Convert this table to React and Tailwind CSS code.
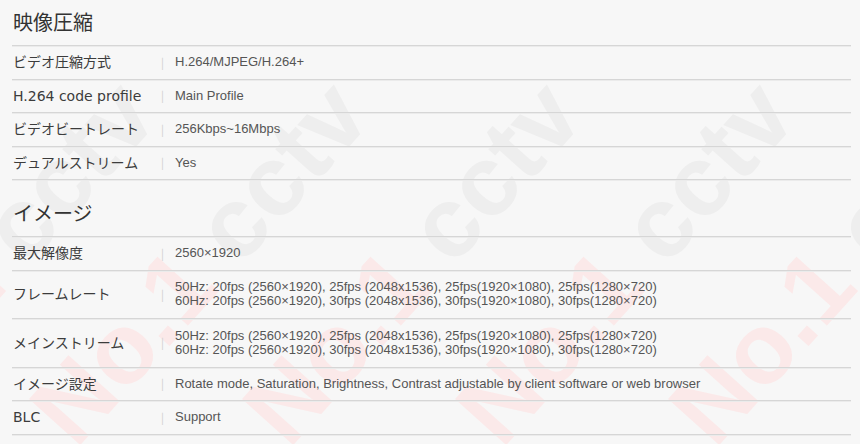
const sections = [
  {
    title: '映像圧縮',
    rows: [
      { label: 'ビデオ圧縮方式', value: ['H.264/MJPEG/H.264+'] },
      { label: 'H.264 code profile', value: ['Main Profile'] },
      { label: 'ビデオビートレート', value: ['256Kbps~16Mbps'] },
      { label: 'デュアルストリーム', value: ['Yes'] },
    ],
  },
  {
    title: 'イメージ',
    rows: [
      { label: '最大解像度', value: ['2560×1920'] },
      {
        label: 'フレームレート',
        value: [
          '50Hz: 20fps (2560×1920), 25fps (2048x1536), 25fps(1920×1080), 25fps(1280×720)',
          '60Hz: 20fps (2560×1920), 30fps (2048x1536), 30fps(1920×1080), 30fps(1280×720)',
        ],
      },
      {
        label: 'メインストリーム',
        value: [
          '50Hz: 20fps (2560×1920), 25fps (2048x1536), 25fps(1920×1080), 25fps(1280×720)',
          '60Hz: 20fps (2560×1920), 30fps (2048x1536), 30fps(1920×1080), 30fps(1280×720)',
        ],
      },
      { label: 'イメージ設定', value: ['Rotate mode, Saturation, Brightness, Contrast adjustable by client software or web browser'] },
      { label: 'BLC', value: ['Support'] },
    ],
  },
];

// watermark tiles, one every 213px
const marks = [-126, 87, 300, 513, 726];

function Watermark({ left }) {
  return (
    <div
      className='absolute top-[360px] h-[100px] origin-bottom-left -rotate-[48deg] whitespace-nowrap font-["Liberation_Sans",Arial,sans-serif] font-bold text-[100px] leading-[100px]'
      style={{ left }}
    >
      <span className='text-[#fbe9e9]'>No.1 </span>
      <span className='text-[#eeeeee]'>cctv</span>
    </div>
  );
}

function Row({ label, value }) {
  const tall = value.length > 1;
  return (
    <div
      className={
        'flex items-center border-b border-[#d6d6d6] shadow-[0_1px_0_#ebebeb] ' +
        (tall ? 'min-h-[48.5px]' : 'min-h-[33.5px]')
      }
    >
      <div className='w-[149px] pl-px text-[14px] text-[#3c3c3c] leading-5 font-["DejaVu_Sans","Noto_Sans_CJK_JP",sans-serif]'>
        {label}
      </div>
      <div className='w-[14px] text-[11px] text-[#cfcfcf] leading-none'>|</div>
      <div className='text-[13px] text-[#555] leading-[14px] font-["Liberation_Sans",Arial,sans-serif]'>
        {value.map((v, i) => (
          <div key={i}>{v}</div>
        ))}
      </div>
    </div>
  );
}

export default function App() {
  return (
    <main className='relative w-[860px] h-[444px] overflow-hidden bg-[#f7f7f7] font-["Noto_Sans_CJK_JP","Noto_Sans",sans-serif]'>
      <div className='absolute inset-0 pointer-events-none'>
        {marks.map((x) => (
          <Watermark key={x} left={x} />
        ))}
      </div>
      <div className='relative pl-3 pr-[9px]'>
        {sections.map((s, i) => (
          <section key={s.title} className={i > 0 ? 'pt-[11px]' : ''}>
            <h2 className='pl-px pt-[8px] pb-[9px] text-[20px] leading-7 text-[#333] border-b border-[#d6d6d6] shadow-[0_1px_0_#ebebeb]'>
              {s.title}
            </h2>
            {s.rows.map((r) => (
              <Row key={r.label} {...r} />
            ))}
          </section>
        ))}
      </div>
    </main>
  );
}
